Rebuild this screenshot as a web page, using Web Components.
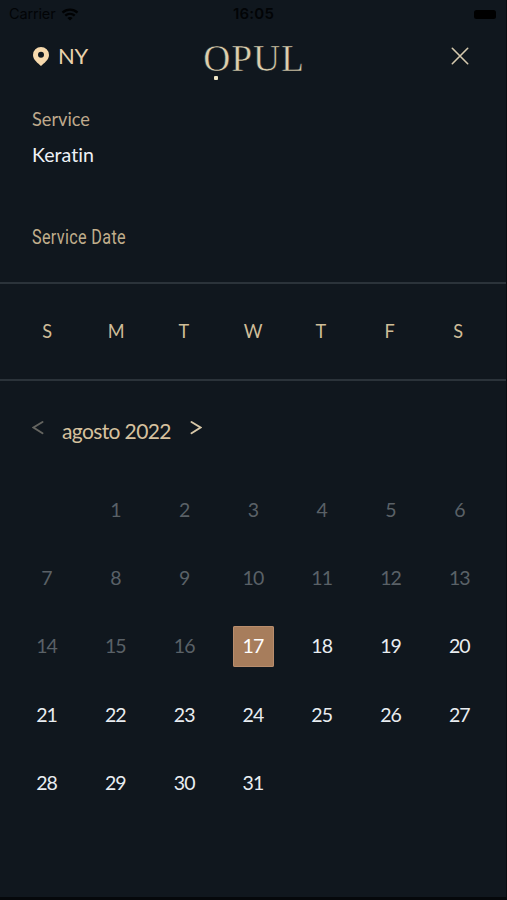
<!DOCTYPE html>
<html lang="en">
<head>
<meta charset="utf-8">
<title>Opul booking</title>
<style>
html,body{margin:0;height:100%;background:#10171e}
body{overflow:hidden;font-family:Lato,"Open Sans",sans-serif;font-variant-ligatures:none;color:#e1cba8}
</style>
</head>
<body>
<booking-screen>
  <status-bar></status-bar>
  <app-header>NY</app-header>
  <booking-summary></booking-summary>
  <week-header></week-header>
  <month-switcher>agosto 2022</month-switcher>
  <month-grid start="1" days="31" today="17"></month-grid>
</booking-screen>
<script>
function define(name, html, setup) {
  customElements.define(name, class extends HTMLElement {
    constructor() {
      super();
      this.attachShadow({mode: 'open'}).innerHTML = html;
    }
    connectedCallback() { if (setup) setup(this, this.shadowRoot); }
  });
}

define('booking-screen', `
<style>
:host{display:flex;flex-direction:column;box-sizing:border-box;width:507px;height:900px;overflow:hidden;background:#10171e;border-bottom:3px solid #05080b;border-right:1px solid #080c10}
</style><slot></slot>`);

define('status-bar', `
<style>
:host{display:grid;grid-template-columns:1fr auto 1fr;align-items:center;height:28px;padding:0 10px 0 9px;color:#020406;font:14.500px/28px Inter,Roboto,sans-serif}
.left{display:flex;align-items:center;gap:6px;letter-spacing:-.15px}
b{font-weight:600;letter-spacing:.2px;font-size:15px;margin-left:2px}
.battery{justify-self:end;width:22px;height:9px;border-radius:2.5px;background:#000}
svg{display:block}
</style>
<div class="left"><span>Carrier</span>
<svg width="18" height="13" viewBox="0 0 17 13" fill="none" stroke="#010203" stroke-width="2.3"><path d="M1 4.6C5.3.6 11.7.6 16 4.6M3.8 7.7c2.8-2.5 6.6-2.5 9.4 0"/><path d="M8.5 12.6 5.9 9.9c1.5-1.3 3.7-1.3 5.2 0z" fill="#010203" stroke="none"/></svg></div>
<b>16:05</b><div class="battery"></div>`);

define('opul-logo', `
<style>
:host{display:block;position:relative;font:37.500px/44px "Liberation Serif",serif;color:#dccfae;height:44px;letter-spacing:.9px}
span{-webkit-text-stroke:.5px #10171e}
i{position:absolute;left:11px;top:39px;width:4px;height:4px;border-radius:1px;background:#eee5c4}
</style><span>OPUL</span><i></i>`);

define('app-header', `
<style>
:host{display:grid;grid-template-columns:1fr auto 1fr;height:72px;padding:0 37px 0 33px;align-items:start}
.place{display:flex;align-items:center;gap:9px;height:55px;font-size:22px;letter-spacing:-.4px;color:#ead2ac}
.place svg{margin-top:1px}
opul-logo{margin:9px -4px 0 2px}
.close{justify-self:end;margin-top:19px}
svg{display:block}
</style>
<div class="place"><svg width="16" height="19" viewBox="0 0 16 19"><path fill="#f6d9ad" fill-rule="evenodd" d="M8 0a8 8 0 0 1 8 8c0 4.8-5.2 8.4-8 11-2.800-2.600-8-6.200-8-11a8 8 0 0 1 8-8zm0 4.800a3 3 0 1 0 0 6 3 3 0 0 0 0-6z"/></svg><slot></slot></div>
<opul-logo></opul-logo>
<svg class="close" width="18" height="18" viewBox="0 0 18 18" stroke="#d5c9ae" stroke-width="1.6" stroke-linecap="round"><path d="m1.300 1.300 15.400 15.400M16.700 1.300 1.300 16.700"/></svg>`);

define('booking-summary', `
<style>
:host{display:block;height:182px;padding-left:32px;box-sizing:border-box;font-size:20px;line-height:36px}
div{width:max-content;transform-origin:0 50%}
.label{color:#bfa98c;transform:scaleX(.91)}
.value{color:#eef1f6;transform:scaleX(.98)}
.date{margin-top:47px;font:19.500px/37px Roboto,sans-serif;color:#c0ae8c;transform:scaleX(.83);letter-spacing:.4px}
</style>
<div class="label">Service</div><div class="value">Keratin</div><div class="date">Service Date</div>`);

define('week-header', `
<style>
:host{display:grid;grid-template-columns:repeat(7,68.500px);box-sizing:border-box;height:99px;padding-left:13px;border:solid #2b333a;border-width:2px 0;align-items:center;justify-items:center;font-size:19.500px;color:#cfbd98}
span{transform:scaleX(.93);margin-top:-2px}
</style>`, (host, root) => {
  for (const d of 'SMTWTFS') {
    const s = document.createElement('span');
    s.textContent = d;
    root.append(s);
  }
});

define('month-switcher', `
<style>
:host{display:flex;height:95px;padding-left:32px;align-items:flex-start}
.name{margin:35px 19px 0 18px;height:27px;overflow:hidden;font-size:21px;line-height:30px;color:#d6c19e;letter-spacing:-.62px}
svg{display:block;margin-top:38px;fill:none;stroke-width:1.900;stroke-linecap:round}
</style>
<svg width="12" height="18" viewBox="0 0 12 18" stroke="#656560"><path d="M10.500 3 1.500 8.500l9 5.800"/></svg>
<span class="name"><slot></slot></span>
<svg width="12" height="18" viewBox="0 0 12 18" stroke="#d8c8a8"><path d="m1.500 3 9 5.500-9 5.800"/></svg>`);

define('month-grid', `
<style>
:host{display:grid;grid-template-columns:repeat(7,68.800px);grid-auto-rows:68.400px;padding-left:12.700px;align-items:center;justify-items:center;font-size:19.500px;letter-spacing:-.9px}
span{box-sizing:border-box;color:#e9edf1;width:41px;padding-right:1px;line-height:40px;height:41px;text-align:center}
.past{color:#5a6167}
.today{background:#a77d5c;border-radius:2px;color:#fff;box-shadow:inset 0 0 0 1px #b88d6d}
</style>`, (host, root) => {
  const today = +host.getAttribute('today');
  for (let d = 1; d <= +host.getAttribute('days'); d++) {
    const s = document.createElement('span');
    s.textContent = d;
    if (d === 1) s.style.gridColumnStart = +host.getAttribute('start') + 1;
    if (d < today) s.className = 'past';
    if (d === today) s.className = 'today';
    root.append(s);
  }
});
</script>
</body>
</html>
